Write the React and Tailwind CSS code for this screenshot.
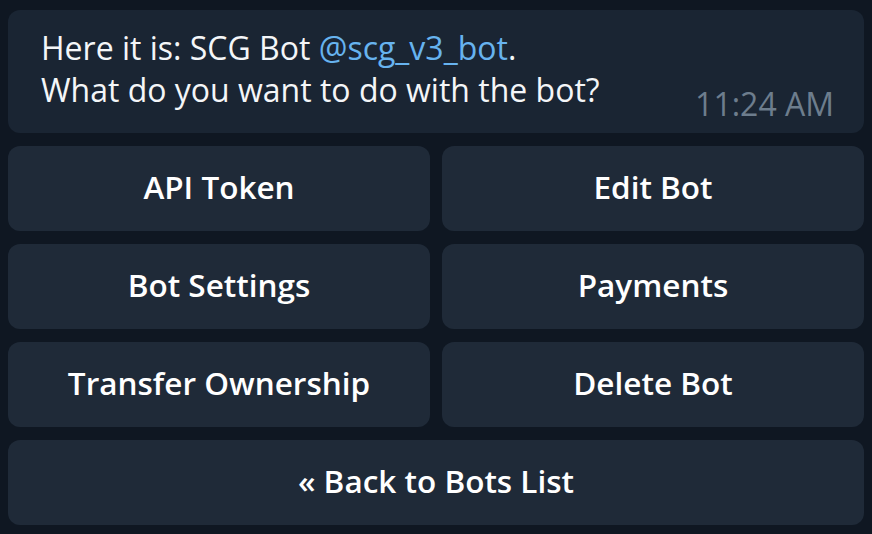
export default function App() {
  const rows = [
    ["API Token", "Edit Bot"],
    ["Bot Settings", "Payments"],
    ["Transfer Ownership", "Delete Bot"],
  ];

  return (
    <div
      className="w-[872px] h-[534px] bg-[#0f1722] pt-[10px] px-[8px] flex flex-col gap-[13px]"
      style={{ fontFamily: '"Open Sans", "Noto Sans", sans-serif' }}
    >
      {/* Message bubble */}
      <div className="h-[123px] bg-[#1a2533] rounded-[12px] pt-[17px] pl-[33px] pr-[30px] flex justify-between items-end">
        <div className="text-[32px] leading-[42px] text-[#f4f6f8] self-start">
          <p>
            Here it is: SCG Bot <span className="text-[#67b3ef]">@scg_v3_bot</span>.
          </p>
          <p>What do you want to do with the bot?</p>
        </div>
        <span className="text-[32px] leading-[32px] text-[#6d7d8d] mb-[13px]">11:24 AM</span>
      </div>

      {/* Inline keyboard */}
      {rows.map((row) => (
        <div key={row[0]} className="grid grid-cols-2 gap-[12px]">
          {row.map((label) => (
            <button
              key={label}
              className="h-[85px] pb-[3px] rounded-[12px] bg-[#1f2a38] text-white text-[31.5px] font-semibold"
            >
              {label}
            </button>
          ))}
        </div>
      ))}
      <button className="h-[85px] pb-[3px] rounded-[12px] bg-[#1f2a38] text-white text-[31.5px] font-semibold">
        « Back to Bots List
      </button>
    </div>
  );
}
